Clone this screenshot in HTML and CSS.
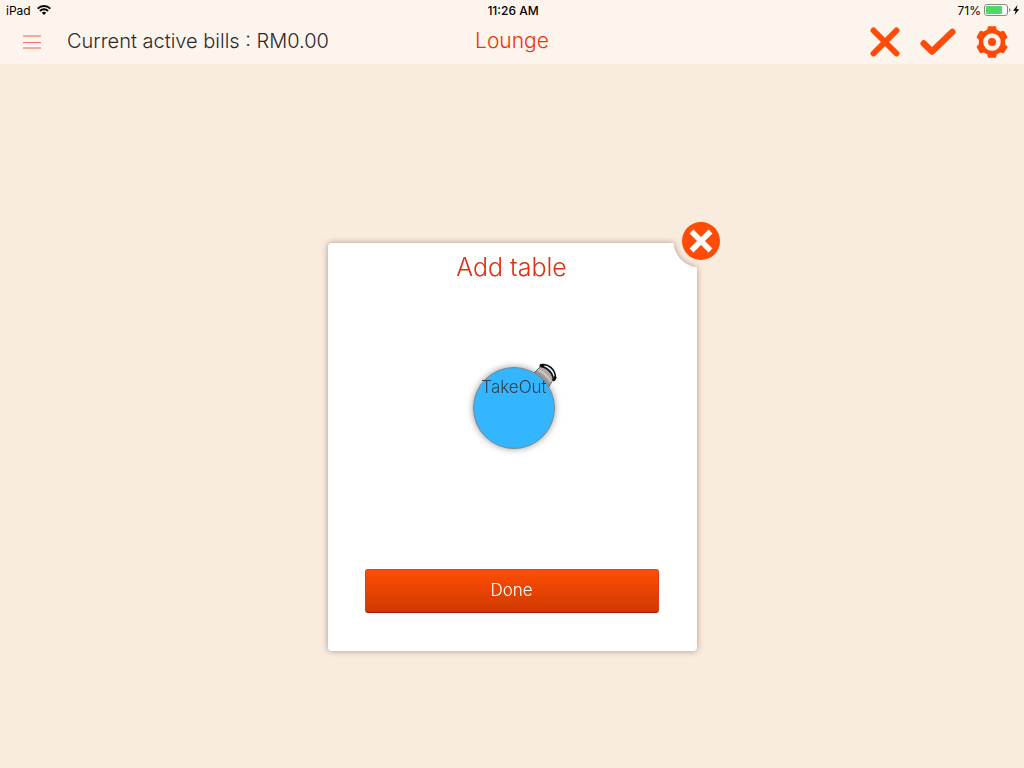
FILE: index.html
```html
<!DOCTYPE html>
<html lang="en">
<head>
<meta charset="utf-8">
<meta name="viewport" content="width=device-width, initial-scale=1">
<title>Lounge</title>
<link rel="stylesheet" href="styles.css">
</head>
<body>
<header class="top">
  <div class="status">
    <div class="status-side">
      <span>iPad</span>
      <svg class="wifi" width="14" height="10" viewBox="0 0 14 10" fill="none" stroke="#000" stroke-width="2" aria-hidden="true">
        <path d="M.7 3.6a9 9 0 0 1 12.6 0M3 6a5.7 5.7 0 0 1 8 0"/>
        <path d="M7 10 4.8 7.8a3.2 3.2 0 0 1 4.4 0z" fill="#000" stroke="none"/>
      </svg>
    </div>
    <time class="clock">11:26 AM</time>
    <div class="status-side status-right">
      <span>71%</span>
      <svg width="36" height="12" viewBox="0 0 36 12" aria-hidden="true">
        <rect x=".5" y=".5" width="23" height="11" rx="2.5" fill="#fff" stroke="#8b8986"/>
        <rect x="2" y="2" width="16" height="8" rx="1" fill="#4cd964"/>
        <path d="M25 4v4q1.500-.7 1.500-2T25 4z" fill="#8b8986"/>
        <path d="M33.500 1 29 6.700h2.700L30.500 11 35.200 5.200h-2.700z" fill="#000"/>
      </svg>
    </div>
  </div>
  <nav class="bar">
    <div class="bar-left">
      <button class="icon-btn" aria-label="Menu">
        <svg width="18" height="14" viewBox="0 0 18 14" aria-hidden="true">
          <path d="M0 1h18M0 13h18" stroke="#f5aa9c" stroke-width="2"/><path d="M0 7.500h18" stroke="#ee7766"/>
        </svg>
      </button>
      <span class="bills">Current active bills : RM0.00</span>
    </div>
    <h1 class="title">Lounge</h1>
    <div class="bar-right">
      <button class="icon-btn" aria-label="Cancel">
        <svg width="30" height="30" viewBox="0 0 30 30" aria-hidden="true">
          <path d="M3.500 3.500l23 23M26.500 3.500l-23 23" stroke="#ff4b06" stroke-width="6" stroke-linecap="round"/>
        </svg>
      </button>
      <button class="icon-btn" aria-label="Confirm">
        <svg width="36" height="28" viewBox="0 0 36 28" aria-hidden="true">
          <path d="M3.800 15.500l8.200 8L32.200 4" fill="none" stroke="#ff4b06" stroke-width="6.600" stroke-linecap="round" stroke-linejoin="round"/>
        </svg>
      </button>
      <button class="icon-btn" aria-label="Settings">
        <svg width="32" height="32" viewBox="0 0 32 32" fill="#ff4b06" aria-hidden="true">
          <path fill-rule="evenodd" stroke="#ff4b06" stroke-width="1.500" stroke-linejoin="round" d="M12.600 1h6.800l.8 3.200 4 2.300 3.200-1 3.300 5.600-2.300 2.500v4.800l2.300 2.500-3.300 5.600-3.200-1-4 2.300-.8 3.200h-6.800l-.8-3.200-4-2.300-3.200 1-3.300-5.600 2.300-2.500v-4.800l-2.300-2.500 3.300-5.600 3.200 1 4-2.300zM16 6.500a9.500 9.500 0 1 0 0 19 9.500 9.500 0 0 0 0-19z"/>
          <circle cx="16" cy="16" r="4"/>
        </svg>
      </button>
    </div>
  </nav>
</header>
<main class="stage">
  <section class="dialog" role="dialog" aria-labelledby="dialog-title">
    <div class="sheet-shadow">
      <div class="sheet">
        <h2 class="dialog-title" id="dialog-title">Add table</h2>
        <div class="preview">
          <div class="table">
            <svg class="chair" width="28" height="28" viewBox="0 0 28 28" aria-hidden="true">
              <path d="M10 5Q18 8 22.500 18L17 27 1 14z" fill="#b3acaa" stroke="#666"/>
              <path d="M7 9Q15 12 20 21" fill="none" stroke="#d2cdcb" stroke-width="2"/>
              <path d="M10.500 3.500C18 2.500 24.500 9 24.500 17L22.500 19.500C22 12 17 6.500 9.500 5.500z" fill="#eee" stroke="#111" stroke-width="1.500" stroke-linejoin="round"/>
              <path d="M10 4.500l2 .3M24 16.500l-1 2" stroke="#111" stroke-width="3" stroke-linecap="round"/>
            </svg>
            <div class="disc">TakeOut</div>
          </div>
        </div>
        <button class="done">Done</button>
      </div>
    </div>
    <button class="close" aria-label="Close">
      <svg width="38" height="38" viewBox="0 0 38 38" aria-hidden="true">
        <circle cx="19" cy="19" r="19" fill="#ff4b06"/>
        <path d="M9.500 9.500l19 19M28.500 9.500l-19 19" stroke="#fff" stroke-width="5.500"/>
      </svg>
    </button>
  </section>
</main>
</body>
</html>
```

FILE: styles.css
```css
* { box-sizing: border-box; }
body {
  margin: 0;
  min-height: 100vh;
  display: flex;
  flex-direction: column;
  background: #f9ebde;
  color: #2b2b2b;
  font-family: Inter, "Liberation Sans", sans-serif;
  font-weight: 300;
}
button { padding: 0; border: 0; background: none; font: inherit; cursor: pointer; }
svg { display: block; }
h1, h2 { margin: 0; font-weight: 300; }

.top { background: #fdf5ed; }
.status, .bar {
  display: grid;
  grid-template-columns: 1fr auto 1fr;
  align-items: center;
}
.status {
  height: 20px;
  padding: 0 4px 0 6px;
  color: #000;
  font-size: 12px;
  font-weight: 400;
}
.status-side { display: flex; align-items: center; gap: 6px; }
.status-right { justify-content: flex-end; gap: 3px; }
.clock { font-weight: 500; }
.bar { height: 44px; padding: 0 16px 0 23px; }
.bar-left { display: flex; align-items: center; gap: 26px; }
.bar-right { display: flex; align-items: center; justify-content: flex-end; gap: 20px; }
.bills, .title { padding-bottom: 3px; line-height: 24px; }
.bills { font-size: 20px; white-space: nowrap; }
.title { padding-right: 7px; color: #ee3308; font-size: 21px; }

.stage { flex: 1; display: grid; place-items: center; padding: 62px 0 0; }
.dialog { position: relative; width: 100%; max-width: 369px; }
.sheet-shadow { filter: drop-shadow(0 0 3px rgba(100, 65, 45, .5)); }
.sheet {
  display: flex;
  flex-direction: column;
  padding: 8px 38px 38px 37px;
  border-radius: 3px;
  background: #fff;
  -webkit-mask: radial-gradient(circle at calc(100% + 3px) -2px, transparent 26px, #000 27px);
  mask: radial-gradient(circle at calc(100% + 3px) -2px, transparent 26px, #000 27px);
}
.dialog-title { color: #e03010; font-size: 25px; line-height: 32px; text-align: center; }
.preview { display: grid; place-items: center; height: 286px; padding: 0 0 36px 5px; }
.table { position: relative; }
.disc {
  position: relative;
  width: 82px;
  height: 82px;
  padding-top: 8px;
  border: 1px solid #788994;
  border-radius: 50%;
  background: #33b5ff;
  box-shadow: 0 0 7px rgba(0, 0, 0, .4);
  color: #333f48;
  font-size: 17px;
  line-height: 22px;
  text-align: center;
}
.chair { position: absolute; top: -6px; right: -4px; }
.done {
  height: 44px;
  padding-bottom: 3px;
  border: 1px solid #d74218;
  border-bottom-color: #a01808;
  border-radius: 3px;
  background: linear-gradient(#ff4d05, #cd3900);
  color: #fff;
  font-size: 17px;
}
.close { position: absolute; top: -21px; right: -23px; border-radius: 50%; }
```
